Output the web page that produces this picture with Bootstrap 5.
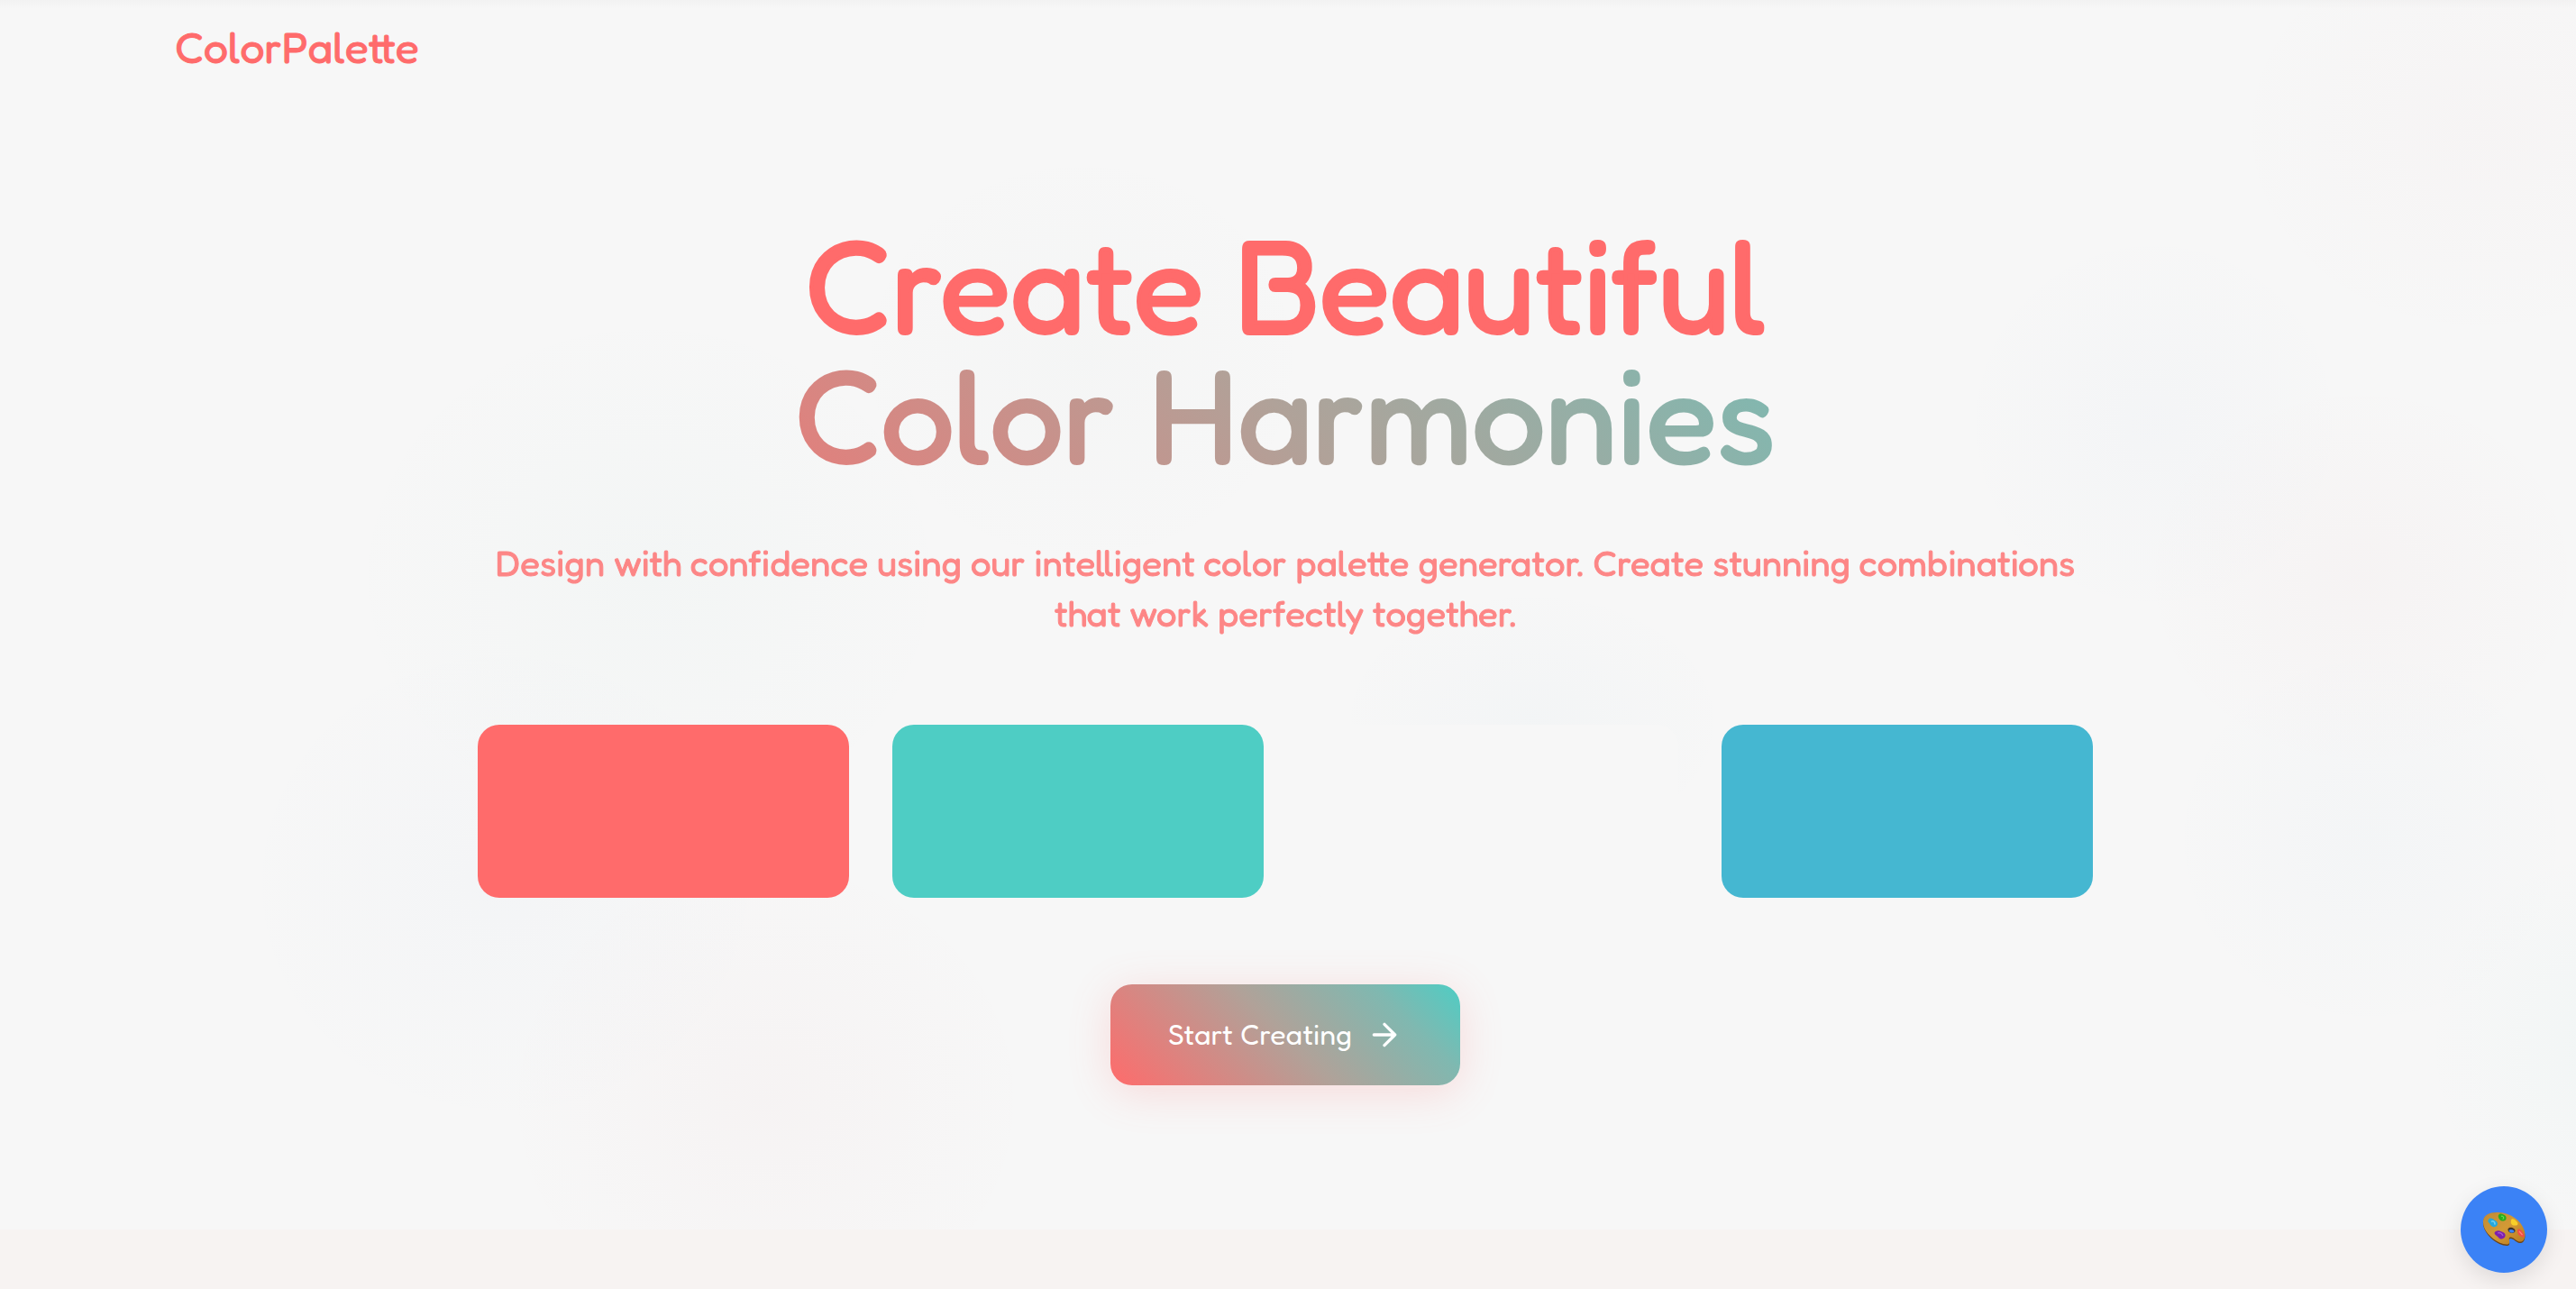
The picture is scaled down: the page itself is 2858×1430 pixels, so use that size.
<!DOCTYPE html>
<html lang="en">
<head>
<meta charset="utf-8">
<meta name="viewport" content="width=device-width, initial-scale=1">
<title>ColorPalette</title>
<link rel="stylesheet" href="https://cdn.jsdelivr.net/npm/bootstrap@5.3.0/dist/css/bootstrap.min.css">
<style>
:root {
  --coral: #ff6b6b;
  --teal: #4ecdc4;
  --mist: #f7f7f7;
  --sky: #45b7d1;
  --blend: linear-gradient(45deg, var(--coral), #b0a299 50%, #80b8b0 80%, var(--teal));
}
body {
  font-family: Fredoka, Quicksand, Lato, sans-serif;
  font-weight: 400;
  color: var(--coral);
  background: #f7f3f2;
  padding-right: 6px;
  overflow: hidden;
}
.hero {
  margin-right: -6px;
  padding-right: 6px;
  background:
    linear-gradient(rgba(0,0,0,.02), rgba(0,0,0,0) 10px),
    radial-gradient(ellipse 280px 240px at 2750px 145px, rgba(200,100,110,.02), transparent),
    radial-gradient(ellipse 220px 220px at 2390px 470px, rgba(69,130,209,.02), transparent),
    radial-gradient(ellipse 250px 220px at 2620px 640px, rgba(200,80,90,.025), transparent),
    radial-gradient(ellipse 230px 220px at 2630px 930px, rgba(69,150,209,.02), transparent),
    radial-gradient(ellipse 200px 220px at 2890px 1160px, rgba(78,205,196,.03), transparent),
    radial-gradient(ellipse 260px 240px at 1200px 400px, rgba(120,160,150,.02), transparent),
    radial-gradient(ellipse 340px 300px at 720px 640px, rgba(78,180,160,.025), transparent),
    radial-gradient(ellipse 300px 280px at 560px 980px, rgba(69,130,209,.018), transparent),
    radial-gradient(ellipse 300px 280px at 850px 1220px, rgba(200,80,90,.025), transparent),
    radial-gradient(ellipse 220px 150px at 1700px 800px, rgba(69,150,190,.025), transparent),
    var(--mist);
}
.page-wrap { max-width: 2560px; padding: 20px 48px; }
.brand { font-size: 48px; line-height: 64px; color: var(--coral); -webkit-text-stroke: 1px; }
.brand:hover { color: var(--coral); }
.hero-inner { max-width: 1792px; padding: 140px 0 160px; }
.hero-title { font-size: 144px; line-height: 144px; font-weight: 400; margin-bottom: 64px; -webkit-text-stroke: 4px; }
.gradient-text {
  background: var(--blend);
  -webkit-background-clip: text;
  background-clip: text;
  color: transparent;
}
.tagline { font-size: 40px; line-height: 56px; opacity: .8; padding: 0 16px; margin-bottom: 96px; -webkit-text-stroke: 1px; }
.swatches { gap: 48px; margin-bottom: 96px; }
.swatch { height: 192px; border-radius: 24px; }
.swatch-coral { background: var(--coral); }
.swatch-teal { background: var(--teal); }
.swatch-mist { background: var(--mist); }
.swatch-sky { background: var(--sky); }
.cta {
  gap: 16px;
  padding: 32px 64px;
  border: 0;
  border-radius: 24px;
  font-size: 32px;
  line-height: 48px;
  color: #fff;
  background: var(--blend);
  box-shadow: 0 8px 48px rgba(255,107,107,.2);
}
.palette-fab {
  right: 32px;
  bottom: 18px;
  width: 96px;
  height: 96px;
  background: #3b82f6;
  box-shadow: 0 8px 24px rgba(0,0,0,.1);
}
</style>
</head>
<body>
<div class="hero">
  <nav class="page-wrap mx-auto d-flex">
    <a class="brand text-decoration-none" href="#">ColorPalette</a>
  </nav>
  <main class="hero-inner mx-auto text-center">
    <h1 class="hero-title">Create Beautiful<span class="gradient-text d-block">Color Harmonies</span></h1>
    <p class="tagline">Design with confidence using our intelligent color palette generator. Create stunning combinations that work perfectly together.</p>
    <div class="swatches d-flex">
      <div class="swatch swatch-coral flex-fill"></div>
      <div class="swatch swatch-teal flex-fill"></div>
      <div class="swatch swatch-mist flex-fill"></div>
      <div class="swatch swatch-sky flex-fill"></div>
    </div>
    <button type="button" class="cta d-inline-flex align-items-center align-top">
      Start Creating
      <svg width="40" height="40" viewBox="0 0 24 24" fill="none" stroke="currentColor" stroke-width="2" stroke-linecap="round" stroke-linejoin="round" aria-hidden="true"><path d="M5 12h14M12 5l7 7-7 7"/></svg>
    </button>
  </main>
</div>
<button type="button" class="palette-fab position-fixed rounded-circle border-0 p-0 d-flex align-items-center justify-content-center" aria-label="Choose palette">
  <svg width="48" height="40" viewBox="0 0 48 40" aria-hidden="true">
    <defs><linearGradient id="wood" x1="0" y1="0" x2="1" y2="1"><stop offset="0" stop-color="#c08a38"/><stop offset=".5" stop-color="#d39a35"/><stop offset="1" stop-color="#b87820"/></linearGradient></defs>
    <path d="M1 11C2 4 9 1 18 1.500C31 2 43 11 46.500 22C49 30 46 36 41 35C37 34 35 30 31.500 30C28 30.500 31 34 30 36.500C29 39 24 38 19 36C9 31 0 21 1 11Z" fill="#6b4318"/>
    <path d="M1 10C2 3.500 9 .500 18 1C31 1.500 43 10 46.500 20.500C49 28.500 46 34.500 41 33.500C37 32.500 35 28.500 31.500 28.500C28 29 31 32.500 30 35C29 37.500 24 36.500 19 34.500C9 29.500 0 20 1 10Z" fill="url(#wood)"/>
    <path d="M28.500 19.500C30 16 37 18 36.500 22C35 25.500 28 24 28.500 19.500Z" fill="#3b3028"/>
    <path d="M29.500 21C31 19 36 20 35.500 22.500C34 24.500 30 24 29.500 21Z" fill="#3b82f6"/>
    <path d="M7 9C9 6 12 8 14 10C18 11 18 16 14 17C11 18 9 15 8 13C6 12 6 10 7 9Z" fill="#25a8dc"/>
    <path d="M10 11.500C12 9 15 13 13.500 14.500" fill="none" stroke="#70d0f2" stroke-width="1.500"/>
    <path d="M18 4C19 1.500 23 2 26 5C28 9 25 11 22 10.500C19 10 17 6 18 4Z" fill="#28ad1b"/>
    <path d="M21 5.500C23 4 25 8 22.500 8.500" fill="none" stroke="#6bdc4d" stroke-width="1.200"/>
    <path d="M32 10C32 7 36 8 38 11C41 14 39 16 36 15.500C34 16 31 14 32 10Z" fill="#f8cf28"/>
    <path d="M39.500 20C41 18.500 44 21 45.500 24C48 28 46 30 43 27.500C40 27 38 22 39.500 20Z" fill="#f44d45"/>
    <path d="M41 22L44.500 26" stroke="#ff8b78" stroke-width="1.200"/>
    <path d="M15 22C18 20 21 22 23 23C27 25 26 29 23 30C19 32 18 28 16 27C13 25 13 23 15 22Z" fill="#7d1fb0"/>
    <path d="M17 24C20 23 22 25 23 27" fill="none" stroke="#a759d2" stroke-width="1.200"/>
  </svg>
</button>
<script src="https://cdn.jsdelivr.net/npm/bootstrap@5.3.0/dist/js/bootstrap.bundle.min.js"></script>
</body>
</html>
